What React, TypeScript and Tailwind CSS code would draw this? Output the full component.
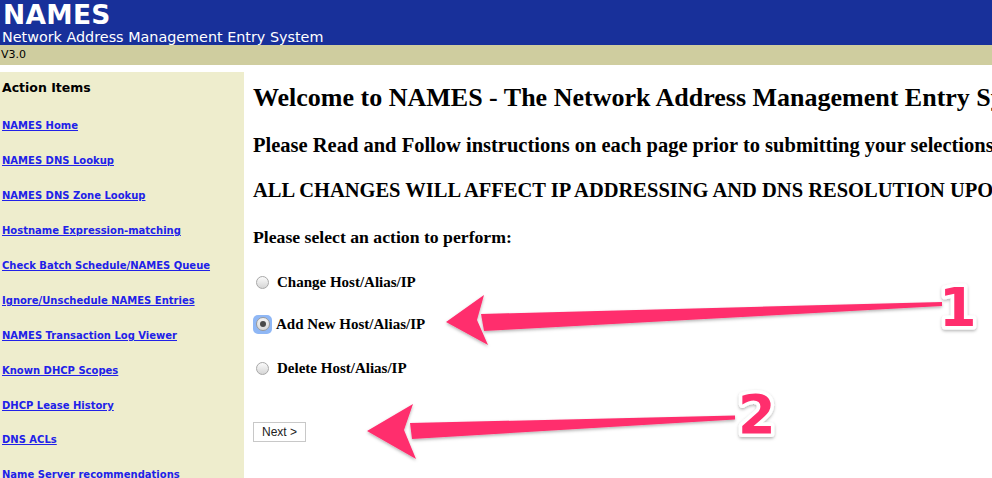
import React from "react";

const links = [
  "NAMES Home",
  "NAMES DNS Lookup",
  "NAMES DNS Zone Lookup",
  "Hostname Expression-matching",
  "Check Batch Schedule/NAMES Queue",
  "Ignore/Unschedule NAMES Entries",
  "NAMES Transaction Log Viewer",
  "Known DHCP Scopes",
  "DHCP Lease History",
  "DNS ACLs",
  "Name Server recommendations",
];

function Radio({ checked }: { checked?: boolean }) {
  if (checked) {
    return (
      <span className="flex h-[19px] w-[19px] items-center justify-center rounded-[5px] bg-[#8fb7f5]">
        <span className="flex h-[14px] w-[14px] items-center justify-center rounded-full border border-[#9a9a9a] bg-gradient-to-b from-[#f4f4f4] to-[#d9d9d9]">
          <span className="h-[6px] w-[6px] rounded-full bg-[#4a4a4a]" />
        </span>
      </span>
    );
  }
  return (
    <span className="flex h-[19px] w-[19px] items-center justify-center">
      <span className="h-[13px] w-[13px] rounded-full border border-[#a8a8a8] bg-gradient-to-b from-[#fbfbfb] to-[#d6d6d6]" />
    </span>
  );
}

export default function App() {
  return (
    <div className="relative h-[478px] w-[992px] overflow-hidden bg-white">
      <div className="bg-[#18309a] text-white h-[45px] pl-[2px]" style={{ fontFamily: '"DejaVu Sans", Verdana, sans-serif' }}>
        <div className="text-[26.5px] font-bold leading-[28px] pl-[1px] pt-[1px] tracking-[0.3px]">NAMES</div>
        <div className="text-[14.35px] leading-[16px]">Network Address Management Entry System</div>
      </div>
      <div className="bg-[#cfcd9f] h-[20px] pl-[1px] text-[11px] leading-[20px] text-black" style={{ fontFamily: '"DejaVu Sans", Verdana, sans-serif' }}>V3.0</div>
      <div className="flex mt-[7px]">
        <div className="w-[244px] shrink-0 bg-[#eeedcd] h-[420px] pl-[2px] pt-[8px]" style={{ fontFamily: '"DejaVu Sans", Verdana, sans-serif' }}>
          <div className="text-[12.5px] font-bold leading-[16px] text-black">Action Items</div>
          <div className="mt-[13px]">
            {links.map((l) => (
              <div key={l} className="h-[34.9px] flex items-center">
                <a href="#" className="text-[10px] font-bold underline text-[#2121e8] leading-[14px]">{l}</a>
              </div>
            ))}
          </div>
        </div>
        <div className="pl-[9px] whitespace-nowrap text-black" style={{ fontFamily: '"Liberation Serif", "Times New Roman", serif' }}>
          <div className="mt-[11px] text-[26px] font-bold leading-[30px]">Welcome to NAMES - The Network Address Management Entry System</div>
          <div className="mt-[21px] text-[20.5px] font-bold leading-[22px]">Please Read and Follow instructions on each page prior to submitting your selections</div>
          <div className="mt-[23px] text-[20.5px] font-bold leading-[22px]">ALL CHANGES WILL AFFECT IP ADDRESSING AND DNS RESOLUTION UPON SUBMISSION</div>
          <div className="mt-[26px] text-[17.7px] font-bold leading-[20px]">Please select an action to perform:</div>
          <div className="mt-[25px] flex items-center h-[20px] text-[15px] font-bold">
            <Radio />
            <span className="ml-[5px]">Change Host/Alias/IP</span>
          </div>
          <div className="mt-[22px] flex items-center h-[20px] text-[15px] font-bold">
            <Radio checked />
            <span className="ml-[4px]">Add New Host/Alias/IP</span>
          </div>
          <div className="mt-[24px] flex items-center h-[20px] text-[15px] font-bold">
            <Radio />
            <span className="ml-[5px]">Delete Host/Alias/IP</span>
          </div>
          <div className="mt-[41px]">
            <button className="h-[20px] w-[53px] border border-[#c8c8c8] bg-white text-[12px] text-[#222]" style={{ fontFamily: '"Liberation Sans", Arial, sans-serif' }}>Next &gt;</button>
          </div>
        </div>
      </div>

      <svg className="pointer-events-none absolute left-0 top-0" width="992" height="478" viewBox="0 0 992 478">
        <defs>
          <filter id="sh" x="-10%" y="-50%" width="120%" height="200%">
            <feDropShadow dx="0" dy="1.5" stdDeviation="1.5" floodColor="#000" floodOpacity="0.3" />
          </filter>
        </defs>
        <g fill="#ff2e6d" filter="url(#sh)">
          <polygon points="942,302 942,306 484,331 481,314" />
          <polygon points="446,322 484,295 477,320 488,345" />
          <polygon points="735,415.5 735,419.5 412,439 410,423" />
          <polygon points="367,431 413,404 404,430 416,459" />
        </g>
        <g filter="url(#sh)" style={{ fontFamily: '"DejaVu Sans", sans-serif' }} fontWeight="bold">
          <text x="939" y="326" fontSize="54" fill="#ff2e6d" stroke="#fff" strokeWidth="7" strokeLinejoin="round" style={{ paintOrder: "stroke" }}>1</text>
          <text x="738" y="433" fontSize="54" fill="#ff2e6d" stroke="#fff" strokeWidth="7" strokeLinejoin="round" style={{ paintOrder: "stroke" }}>2</text>
        </g>
      </svg>
    </div>
  );
}
